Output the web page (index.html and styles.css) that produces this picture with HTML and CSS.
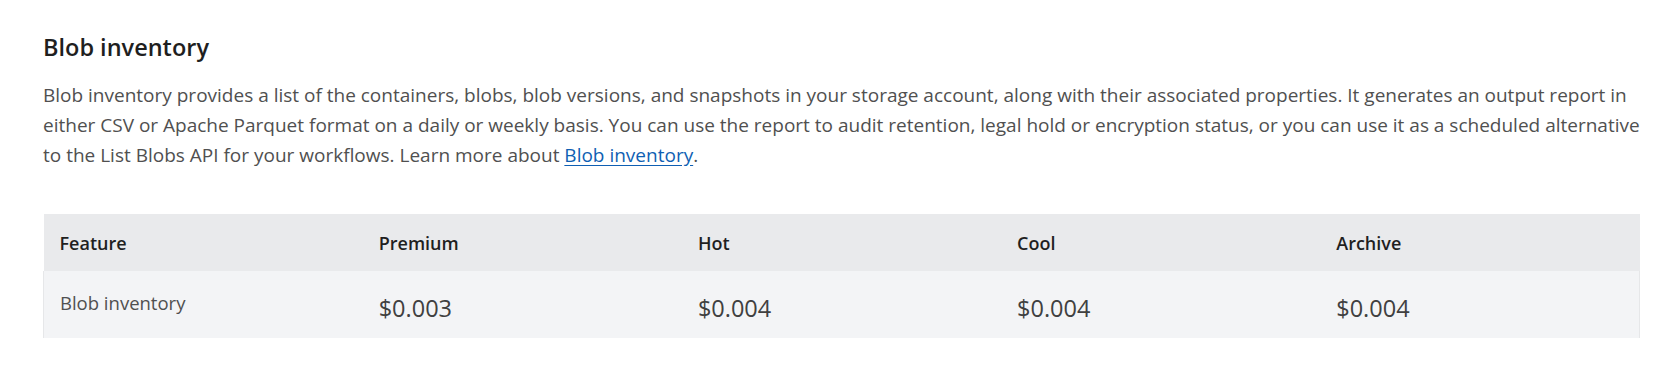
FILE: index.html
```html
<!DOCTYPE html>
<html lang="en">
<head>
<meta charset="utf-8">
<title>Blob inventory</title>
<link rel="stylesheet" href="styles.css">
</head>
<body>
<section class="section">
  <h2 class="title">Blob inventory</h2>
  <p class="desc">Blob inventory provides a list of the containers, blobs, blob versions, and snapshots in your storage account, along with their associated properties. It generates an output report in either CSV or Apache Parquet format on a daily or weekly basis. You can use the report to audit retention, legal hold or encryption status, or you can use it as a scheduled alternative to the List Blobs API for your workflows. Learn more about <a class="link" href="#">Blob inventory</a>.</p>
  <table class="price-table">
    <thead>
      <tr class="head-row">
        <th>Feature</th>
        <th>Premium</th>
        <th>Hot</th>
        <th>Cool</th>
        <th>Archive</th>
      </tr>
    </thead>
    <tbody>
      <tr class="body-row">
        <td class="feature">Blob inventory</td>
        <td class="price">$0.003</td>
        <td class="price">$0.004</td>
        <td class="price">$0.004</td>
        <td class="price last">$0.004</td>
      </tr>
    </tbody>
  </table>
</section>
</body>
</html>
```
FILE: styles.css
```css
html, body {
  margin: 0;
  padding: 0;
  background: #ffffff;
}
body {
  font-family: "Open Sans", "Noto Sans", sans-serif;
  color: #4d4d4d;
}
.section {
  padding: 31px 30px 0 43px;
}
.title {
  margin: 0;
  font-size: 23.5px;
  line-height: 32px;
  font-weight: 600;
  color: #1f1f1f;
}
.desc {
  margin: 17px 0 0 0;
  font-size: 19px;
  line-height: 30px;
  color: #505050;
}
.link {
  color: #0f5fb3;
  text-decoration: underline;
  text-underline-offset: 3px;
}
.price-table {
  margin-top: 44px;
  width: 100%;
  border-collapse: collapse;
  table-layout: fixed;
}
.head-row {
  background: #e9eaec;
}
.head-row th {
  height: 57px;
  padding: 0 16px;
  text-align: left;
  font-size: 18px;
  font-weight: 600;
  color: #1f1f1f;
}
.body-row {
  background: #f3f4f6;
  height: 67px;
}
.body-row td {
  padding: 0 16px;
  text-align: left;
  vertical-align: middle;
}
.body-row .feature {
  border-left: 1px solid #e6e7e9;
}
.body-row .last {
  border-right: 1px solid #e6e7e9;
}
.feature {
  font-size: 18.5px;
  line-height: 26px;
  color: #505050;
  padding-bottom: 4px !important;
}
.price {
  font-size: 23.5px;
  line-height: 32px;
  color: #404040;
  padding-top: 6px !important;
}
```
